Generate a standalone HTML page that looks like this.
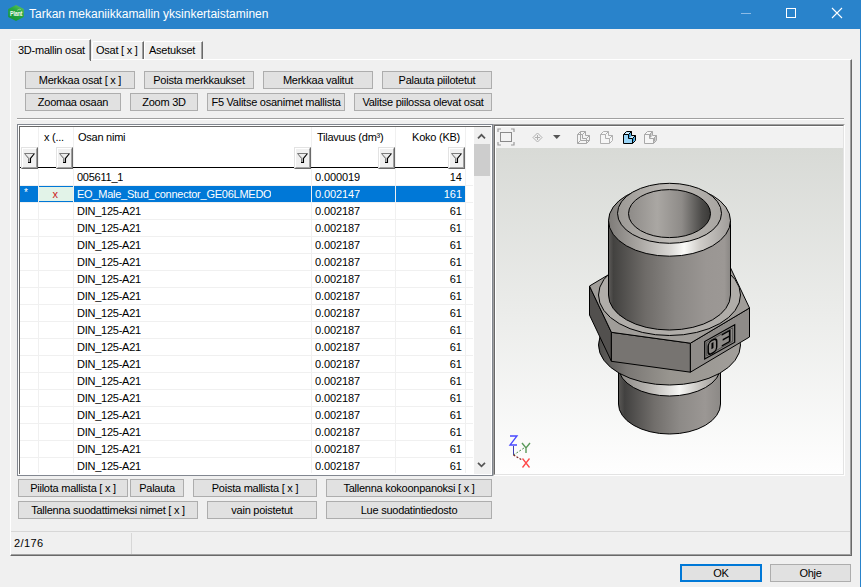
<!DOCTYPE html><html><head><meta charset="utf-8"><style>

*{box-sizing:border-box}
html,body{margin:0;padding:0}
body{width:861px;height:587px;overflow:hidden;background:#f0f0f0;position:relative;font-family:"Liberation Sans", sans-serif;font-size:11px;color:#000;letter-spacing:-0.25px}
.abs{position:absolute}
.btn{position:absolute;background:#e1e1e1;border:1px solid #adadad;height:18px;line-height:16px;text-align:center;white-space:nowrap;overflow:hidden}
.t{position:absolute;white-space:nowrap;line-height:16px}
.hl{position:absolute;height:1px}
.vl{position:absolute;width:1px}

</style></head><body>
<div class="abs" style="left:0;top:0;width:861px;height:29px;background:#2983cb"></div>
<div class="abs" style="left:860px;top:0;width:1px;height:587px;background:#2983cb"></div>
<svg class="abs" style="left:0;top:0" width="30" height="29" viewBox="0 0 30 29">
<defs><linearGradient id="ig" x1="0.2" y1="1" x2="0.8" y2="0"><stop offset="0" stop-color="#159436"/><stop offset="0.6" stop-color="#27a843"/><stop offset="1" stop-color="#62c456"/></linearGradient></defs>
<polygon points="16,5 23.8,9 23.8,17 16,21 8.2,17 8.2,9" fill="url(#ig)"/>
<text x="10" y="16.2" font-family="Liberation Sans" font-weight="bold" font-size="7.2" fill="#f2f8f2" textLength="12.2" lengthAdjust="spacingAndGlyphs">Plant</text>
<path d="M17 10.5 Q19 8.5 21 9.5" stroke="#a8dca8" stroke-width="0.6" fill="none"/>
</svg>
<div class="t" style="left:29px;top:6px;font-size:12px;color:#fff;letter-spacing:0;line-height:16px">Tarkan mekaniikkamallin yksinkertaistaminen</div>
<div class="abs" style="left:741px;top:13px;width:10px;height:1px;background:#8cbbe6"></div>
<div class="abs" style="left:786px;top:8px;width:10px;height:10px;border:1px solid #fff"></div>
<svg class="abs" style="left:831px;top:7px" width="13" height="13" viewBox="0 0 13 13"><path d="M1 1 L11 11 M11 1 L1 11" stroke="#fff" stroke-width="1.1"/></svg>
<div class="abs" style="left:10px;top:59px;width:842px;height:497px;border-left:1px solid #fff;border-top:1px solid #fff;border-right:1px solid #696969;border-bottom:1px solid #696969"></div>
<div class="abs" style="left:11px;top:60px;width:840px;height:495px;border-right:1px solid #a0a0a0;border-bottom:1px solid #a0a0a0"></div>
<div class="abs" style="left:10px;top:39px;width:81px;height:22px;background:#f0f0f0;border-left:1px solid #fff;border-top:1px solid #fff;border-right:1px solid #696969;border-top-left-radius:2px"></div>
<div class="abs" style="left:89px;top:40px;width:1px;height:20px;background:#a0a0a0"></div>
<div class="t" style="left:18px;top:42px">3D-mallin osat</div>
<div class="abs" style="left:92px;top:41px;width:52px;height:18px;border-left:1px solid #fff;border-top:1px solid #fff;border-right:1px solid #696969;border-top-left-radius:2px"></div>
<div class="abs" style="left:142px;top:42px;width:1px;height:17px;background:#a0a0a0"></div>
<div class="t" style="left:96px;top:42px">Osat [ x ]</div>
<div class="abs" style="left:144px;top:41px;width:59px;height:18px;border-left:1px solid #fff;border-top:1px solid #fff;border-right:1px solid #696969;border-top-left-radius:2px"></div>
<div class="abs" style="left:201px;top:42px;width:1px;height:17px;background:#a0a0a0"></div>
<div class="t" style="left:149px;top:42px">Asetukset</div>
<div class="btn" style="left:25px;top:71px;width:110px;height:18px;">Merkkaa osat [ x ]</div>
<div class="btn" style="left:144px;top:71px;width:110px;height:18px;">Poista merkkaukset</div>
<div class="btn" style="left:263px;top:71px;width:110px;height:18px;">Merkkaa valitut</div>
<div class="btn" style="left:382px;top:71px;width:110px;height:18px;">Palauta piilotetut</div>
<div class="btn" style="left:25px;top:93px;width:96px;height:18px;">Zoomaa osaan</div>
<div class="btn" style="left:130px;top:93px;width:68px;height:18px;">Zoom 3D</div>
<div class="btn" style="left:207px;top:93px;width:138px;height:18px;">F5 Valitse osanimet mallista</div>
<div class="btn" style="left:354px;top:93px;width:138px;height:18px;">Valitse piilossa olevat osat</div>
<div class="hl" style="left:17px;top:118px;width:827px;background:#a0a0a0"></div>
<div class="hl" style="left:17px;top:119px;width:827px;background:#fff"></div>
<div class="abs" style="left:17px;top:124px;width:476px;height:352px;border:1px solid #828790;background:#fff"></div>
<div class="abs" style="left:19px;top:126px;width:472px;height:348px;border-left:1px solid #696969;border-top:1px solid #696969"></div>
<div class="vl" style="left:38px;top:127px;height:346px;background:#f0f0f0"></div>
<div class="vl" style="left:73px;top:127px;height:346px;background:#f0f0f0"></div>
<div class="vl" style="left:311px;top:127px;height:346px;background:#f0f0f0"></div>
<div class="vl" style="left:395px;top:127px;height:346px;background:#f0f0f0"></div>
<div class="vl" style="left:465px;top:127px;height:346px;background:#f0f0f0"></div>
<div class="hl" style="left:20px;top:167px;width:445px;background:#000"></div>
<div class="abs" style="left:21px;top:147px;width:17px;height:22px;border-left:1px solid #e3e3e3;border-top:1px solid #e3e3e3;border-right:1px solid #696969;border-bottom:1px solid #696969"><div class="abs" style="left:0;top:0;width:15px;height:20px;background:#f0f0f0;border-left:1px solid #fff;border-top:1px solid #fff;border-right:1px solid #a0a0a0;border-bottom:1px solid #a0a0a0"><svg width="13" height="18" viewBox="0 0 13 18" style="position:absolute;left:0;top:0"><path d="M1.5 4.5 H11.5 L7.5 9.5 V13.5 H5.5 V9.5 Z" fill="#b8b8b8"/><path d="M2.5 5 H10.5 L6.5 9 Z" fill="#ececec"/><path d="M5.5 13.5 V9.5 L1.5 4.5 H11" fill="none" stroke="#7a7a7a" stroke-width="1"/><path d="M11.5 4.5 L7.5 9.5 V13.5 H5" fill="none" stroke="#000" stroke-width="1.1"/></svg></div></div>
<div class="abs" style="left:56px;top:147px;width:17px;height:22px;border-left:1px solid #e3e3e3;border-top:1px solid #e3e3e3;border-right:1px solid #696969;border-bottom:1px solid #696969"><div class="abs" style="left:0;top:0;width:15px;height:20px;background:#f0f0f0;border-left:1px solid #fff;border-top:1px solid #fff;border-right:1px solid #a0a0a0;border-bottom:1px solid #a0a0a0"><svg width="13" height="18" viewBox="0 0 13 18" style="position:absolute;left:0;top:0"><path d="M1.5 4.5 H11.5 L7.5 9.5 V13.5 H5.5 V9.5 Z" fill="#b8b8b8"/><path d="M2.5 5 H10.5 L6.5 9 Z" fill="#ececec"/><path d="M5.5 13.5 V9.5 L1.5 4.5 H11" fill="none" stroke="#7a7a7a" stroke-width="1"/><path d="M11.5 4.5 L7.5 9.5 V13.5 H5" fill="none" stroke="#000" stroke-width="1.1"/></svg></div></div>
<div class="abs" style="left:294px;top:147px;width:17px;height:22px;border-left:1px solid #e3e3e3;border-top:1px solid #e3e3e3;border-right:1px solid #696969;border-bottom:1px solid #696969"><div class="abs" style="left:0;top:0;width:15px;height:20px;background:#f0f0f0;border-left:1px solid #fff;border-top:1px solid #fff;border-right:1px solid #a0a0a0;border-bottom:1px solid #a0a0a0"><svg width="13" height="18" viewBox="0 0 13 18" style="position:absolute;left:0;top:0"><path d="M1.5 4.5 H11.5 L7.5 9.5 V13.5 H5.5 V9.5 Z" fill="#b8b8b8"/><path d="M2.5 5 H10.5 L6.5 9 Z" fill="#ececec"/><path d="M5.5 13.5 V9.5 L1.5 4.5 H11" fill="none" stroke="#7a7a7a" stroke-width="1"/><path d="M11.5 4.5 L7.5 9.5 V13.5 H5" fill="none" stroke="#000" stroke-width="1.1"/></svg></div></div>
<div class="abs" style="left:378px;top:147px;width:17px;height:22px;border-left:1px solid #e3e3e3;border-top:1px solid #e3e3e3;border-right:1px solid #696969;border-bottom:1px solid #696969"><div class="abs" style="left:0;top:0;width:15px;height:20px;background:#f0f0f0;border-left:1px solid #fff;border-top:1px solid #fff;border-right:1px solid #a0a0a0;border-bottom:1px solid #a0a0a0"><svg width="13" height="18" viewBox="0 0 13 18" style="position:absolute;left:0;top:0"><path d="M1.5 4.5 H11.5 L7.5 9.5 V13.5 H5.5 V9.5 Z" fill="#b8b8b8"/><path d="M2.5 5 H10.5 L6.5 9 Z" fill="#ececec"/><path d="M5.5 13.5 V9.5 L1.5 4.5 H11" fill="none" stroke="#7a7a7a" stroke-width="1"/><path d="M11.5 4.5 L7.5 9.5 V13.5 H5" fill="none" stroke="#000" stroke-width="1.1"/></svg></div></div>
<div class="abs" style="left:448px;top:147px;width:17px;height:22px;border-left:1px solid #e3e3e3;border-top:1px solid #e3e3e3;border-right:1px solid #696969;border-bottom:1px solid #696969"><div class="abs" style="left:0;top:0;width:15px;height:20px;background:#f0f0f0;border-left:1px solid #fff;border-top:1px solid #fff;border-right:1px solid #a0a0a0;border-bottom:1px solid #a0a0a0"><svg width="13" height="18" viewBox="0 0 13 18" style="position:absolute;left:0;top:0"><path d="M1.5 4.5 H11.5 L7.5 9.5 V13.5 H5.5 V9.5 Z" fill="#b8b8b8"/><path d="M2.5 5 H10.5 L6.5 9 Z" fill="#ececec"/><path d="M5.5 13.5 V9.5 L1.5 4.5 H11" fill="none" stroke="#7a7a7a" stroke-width="1"/><path d="M11.5 4.5 L7.5 9.5 V13.5 H5" fill="none" stroke="#000" stroke-width="1.1"/></svg></div></div>
<div class="t" style="left:44px;top:129px">x (...</div>
<div class="t" style="left:78px;top:129px">Osan nimi</div>
<div class="t" style="left:317px;top:129px">Tilavuus (dm³)</div>
<div class="t" style="left:396px;top:129px;width:64px;text-align:right">Koko (KB)</div>
<div class="hl" style="left:20px;top:185px;width:453px;background:#f0f0f0"></div>
<div class="t" style="left:77px;top:169px;color:#000;height:16px;overflow:hidden">005611_1</div>
<div class="t" style="left:315px;top:169px;color:#000;height:16px;overflow:hidden;letter-spacing:-0.1px">0.000019</div>
<div class="t" style="left:396px;top:169px;width:66px;text-align:right;color:#000;height:16px;overflow:hidden;letter-spacing:0">14</div>
<div class="hl" style="left:20px;top:202px;width:453px;background:#f0f0f0"></div>
<div class="abs" style="left:20px;top:186px;width:18px;height:16px;background:#0078d7"></div>
<div class="abs" style="left:39px;top:186px;width:34px;height:16px;background:#e2f3e8;border-top:1px solid #0078d7;border-bottom:1px solid #0078d7"></div>
<div class="abs" style="left:74px;top:186px;width:237px;height:16px;background:#0078d7"></div>
<div class="abs" style="left:312px;top:186px;width:83px;height:16px;background:#0078d7"></div>
<div class="abs" style="left:396px;top:186px;width:69px;height:16px;background:#0078d7"></div>
<div class="t" style="left:24px;top:185px;color:#fff;font-size:10px">*</div>
<div class="t" style="left:38px;top:186px;width:34px;text-align:center;color:#cc1a1a">x</div>
<div class="t" style="left:77px;top:186px;color:#fff;height:16px;overflow:hidden">EO_Male_Stud_connector_GE06LMEDO</div>
<div class="t" style="left:315px;top:186px;color:#fff;height:16px;overflow:hidden;letter-spacing:-0.1px">0.002147</div>
<div class="t" style="left:396px;top:186px;width:66px;text-align:right;color:#fff;height:16px;overflow:hidden;letter-spacing:0">161</div>
<div class="hl" style="left:20px;top:219px;width:453px;background:#f0f0f0"></div>
<div class="t" style="left:77px;top:203px;color:#000;height:16px;overflow:hidden">DIN_125-A21</div>
<div class="t" style="left:315px;top:203px;color:#000;height:16px;overflow:hidden;letter-spacing:-0.1px">0.002187</div>
<div class="t" style="left:396px;top:203px;width:66px;text-align:right;color:#000;height:16px;overflow:hidden;letter-spacing:0">61</div>
<div class="hl" style="left:20px;top:236px;width:453px;background:#f0f0f0"></div>
<div class="t" style="left:77px;top:220px;color:#000;height:16px;overflow:hidden">DIN_125-A21</div>
<div class="t" style="left:315px;top:220px;color:#000;height:16px;overflow:hidden;letter-spacing:-0.1px">0.002187</div>
<div class="t" style="left:396px;top:220px;width:66px;text-align:right;color:#000;height:16px;overflow:hidden;letter-spacing:0">61</div>
<div class="hl" style="left:20px;top:253px;width:453px;background:#f0f0f0"></div>
<div class="t" style="left:77px;top:237px;color:#000;height:16px;overflow:hidden">DIN_125-A21</div>
<div class="t" style="left:315px;top:237px;color:#000;height:16px;overflow:hidden;letter-spacing:-0.1px">0.002187</div>
<div class="t" style="left:396px;top:237px;width:66px;text-align:right;color:#000;height:16px;overflow:hidden;letter-spacing:0">61</div>
<div class="hl" style="left:20px;top:270px;width:453px;background:#f0f0f0"></div>
<div class="t" style="left:77px;top:254px;color:#000;height:16px;overflow:hidden">DIN_125-A21</div>
<div class="t" style="left:315px;top:254px;color:#000;height:16px;overflow:hidden;letter-spacing:-0.1px">0.002187</div>
<div class="t" style="left:396px;top:254px;width:66px;text-align:right;color:#000;height:16px;overflow:hidden;letter-spacing:0">61</div>
<div class="hl" style="left:20px;top:287px;width:453px;background:#f0f0f0"></div>
<div class="t" style="left:77px;top:271px;color:#000;height:16px;overflow:hidden">DIN_125-A21</div>
<div class="t" style="left:315px;top:271px;color:#000;height:16px;overflow:hidden;letter-spacing:-0.1px">0.002187</div>
<div class="t" style="left:396px;top:271px;width:66px;text-align:right;color:#000;height:16px;overflow:hidden;letter-spacing:0">61</div>
<div class="hl" style="left:20px;top:304px;width:453px;background:#f0f0f0"></div>
<div class="t" style="left:77px;top:288px;color:#000;height:16px;overflow:hidden">DIN_125-A21</div>
<div class="t" style="left:315px;top:288px;color:#000;height:16px;overflow:hidden;letter-spacing:-0.1px">0.002187</div>
<div class="t" style="left:396px;top:288px;width:66px;text-align:right;color:#000;height:16px;overflow:hidden;letter-spacing:0">61</div>
<div class="hl" style="left:20px;top:321px;width:453px;background:#f0f0f0"></div>
<div class="t" style="left:77px;top:305px;color:#000;height:16px;overflow:hidden">DIN_125-A21</div>
<div class="t" style="left:315px;top:305px;color:#000;height:16px;overflow:hidden;letter-spacing:-0.1px">0.002187</div>
<div class="t" style="left:396px;top:305px;width:66px;text-align:right;color:#000;height:16px;overflow:hidden;letter-spacing:0">61</div>
<div class="hl" style="left:20px;top:338px;width:453px;background:#f0f0f0"></div>
<div class="t" style="left:77px;top:322px;color:#000;height:16px;overflow:hidden">DIN_125-A21</div>
<div class="t" style="left:315px;top:322px;color:#000;height:16px;overflow:hidden;letter-spacing:-0.1px">0.002187</div>
<div class="t" style="left:396px;top:322px;width:66px;text-align:right;color:#000;height:16px;overflow:hidden;letter-spacing:0">61</div>
<div class="hl" style="left:20px;top:355px;width:453px;background:#f0f0f0"></div>
<div class="t" style="left:77px;top:339px;color:#000;height:16px;overflow:hidden">DIN_125-A21</div>
<div class="t" style="left:315px;top:339px;color:#000;height:16px;overflow:hidden;letter-spacing:-0.1px">0.002187</div>
<div class="t" style="left:396px;top:339px;width:66px;text-align:right;color:#000;height:16px;overflow:hidden;letter-spacing:0">61</div>
<div class="hl" style="left:20px;top:372px;width:453px;background:#f0f0f0"></div>
<div class="t" style="left:77px;top:356px;color:#000;height:16px;overflow:hidden">DIN_125-A21</div>
<div class="t" style="left:315px;top:356px;color:#000;height:16px;overflow:hidden;letter-spacing:-0.1px">0.002187</div>
<div class="t" style="left:396px;top:356px;width:66px;text-align:right;color:#000;height:16px;overflow:hidden;letter-spacing:0">61</div>
<div class="hl" style="left:20px;top:389px;width:453px;background:#f0f0f0"></div>
<div class="t" style="left:77px;top:373px;color:#000;height:16px;overflow:hidden">DIN_125-A21</div>
<div class="t" style="left:315px;top:373px;color:#000;height:16px;overflow:hidden;letter-spacing:-0.1px">0.002187</div>
<div class="t" style="left:396px;top:373px;width:66px;text-align:right;color:#000;height:16px;overflow:hidden;letter-spacing:0">61</div>
<div class="hl" style="left:20px;top:406px;width:453px;background:#f0f0f0"></div>
<div class="t" style="left:77px;top:390px;color:#000;height:16px;overflow:hidden">DIN_125-A21</div>
<div class="t" style="left:315px;top:390px;color:#000;height:16px;overflow:hidden;letter-spacing:-0.1px">0.002187</div>
<div class="t" style="left:396px;top:390px;width:66px;text-align:right;color:#000;height:16px;overflow:hidden;letter-spacing:0">61</div>
<div class="hl" style="left:20px;top:423px;width:453px;background:#f0f0f0"></div>
<div class="t" style="left:77px;top:407px;color:#000;height:16px;overflow:hidden">DIN_125-A21</div>
<div class="t" style="left:315px;top:407px;color:#000;height:16px;overflow:hidden;letter-spacing:-0.1px">0.002187</div>
<div class="t" style="left:396px;top:407px;width:66px;text-align:right;color:#000;height:16px;overflow:hidden;letter-spacing:0">61</div>
<div class="hl" style="left:20px;top:440px;width:453px;background:#f0f0f0"></div>
<div class="t" style="left:77px;top:424px;color:#000;height:16px;overflow:hidden">DIN_125-A21</div>
<div class="t" style="left:315px;top:424px;color:#000;height:16px;overflow:hidden;letter-spacing:-0.1px">0.002187</div>
<div class="t" style="left:396px;top:424px;width:66px;text-align:right;color:#000;height:16px;overflow:hidden;letter-spacing:0">61</div>
<div class="hl" style="left:20px;top:457px;width:453px;background:#f0f0f0"></div>
<div class="t" style="left:77px;top:441px;color:#000;height:16px;overflow:hidden">DIN_125-A21</div>
<div class="t" style="left:315px;top:441px;color:#000;height:16px;overflow:hidden;letter-spacing:-0.1px">0.002187</div>
<div class="t" style="left:396px;top:441px;width:66px;text-align:right;color:#000;height:16px;overflow:hidden;letter-spacing:0">61</div>
<div class="t" style="left:77px;top:458px;color:#000;height:15px;overflow:hidden">DIN_125-A21</div>
<div class="t" style="left:315px;top:458px;color:#000;height:15px;overflow:hidden;letter-spacing:-0.1px">0.002187</div>
<div class="t" style="left:396px;top:458px;width:66px;text-align:right;color:#000;height:15px;overflow:hidden;letter-spacing:0">61</div>
<div class="abs" style="left:474px;top:127px;width:17px;height:347px;background:#f0f0f0"></div>
<div class="abs" style="left:474px;top:144px;width:16px;height:32px;background:#cdcdcd"></div>
<svg class="abs" style="left:474px;top:130px" width="17" height="12" viewBox="0 0 17 12"><path d="M4 8.3 L7.5 4.8 L11 8.3" stroke="#555" stroke-width="1.7" fill="none"/></svg>
<svg class="abs" style="left:474px;top:458px" width="17" height="12" viewBox="0 0 17 12"><path d="M4 4.8 L7.5 8.3 L11 4.8" stroke="#555" stroke-width="1.7" fill="none"/></svg>
<div class="abs" style="left:493px;top:124px;width:352px;height:352px;border-left:1px solid #a0a0a0;border-top:1px solid #a0a0a0;border-right:1px solid #fff;border-bottom:1px solid #fff"></div>
<div class="abs" style="left:494px;top:125px;width:350px;height:350px;border-left:1px solid #696969;border-top:1px solid #696969;border-right:1px solid #e3e3e3;border-bottom:1px solid #e3e3e3;background:#fff"></div>
<div class="abs" style="left:495px;top:126px;width:348px;height:348px;background:#f2f2f2;border-left:1px solid #fff;border-top:1px solid #fff"></div>
<svg class="abs" style="left:496px;top:148px" width="347" height="326" viewBox="496 148 347 326">
<defs>
<linearGradient id="bg3" x1="0" y1="0" x2="0" y2="1"><stop offset="0" stop-color="#d8dad6"/><stop offset="1" stop-color="#fefefe"/></linearGradient>
<linearGradient id="cyl" x1="0" y1="0" x2="1" y2="0">
 <stop offset="0" stop-color="#5e5c5a"/><stop offset="0.04" stop-color="#434240"/><stop offset="0.3" stop-color="#6e6b68"/>
 <stop offset="0.55" stop-color="#8a8784"/><stop offset="0.8" stop-color="#9a9693"/><stop offset="0.95" stop-color="#9c9895"/><stop offset="1" stop-color="#8a8784"/></linearGradient>
<linearGradient id="cham" x1="0" y1="0" x2="1" y2="0">
 <stop offset="0" stop-color="#7e7b78"/><stop offset="0.25" stop-color="#a9a6a2"/><stop offset="0.5" stop-color="#d8d6d3"/><stop offset="0.62" stop-color="#fafaf8"/>
 <stop offset="0.75" stop-color="#cfccc8"/><stop offset="1" stop-color="#9f9c99"/></linearGradient>
<linearGradient id="face" x1="0" y1="0" x2="1" y2="0">
 <stop offset="0" stop-color="#9c9995"/><stop offset="0.5" stop-color="#bdbab6"/><stop offset="1" stop-color="#a8a5a1"/></linearGradient>
<linearGradient id="bore" x1="0" y1="0" x2="1" y2="0">
 <stop offset="0" stop-color="#8e8b88"/><stop offset="0.35" stop-color="#aaa7a3"/><stop offset="0.65" stop-color="#8e8b88"/><stop offset="0.9" stop-color="#4a4947"/><stop offset="1" stop-color="#3a3937"/></linearGradient>
<linearGradient id="band" x1="0" y1="0" x2="1" y2="0">
 <stop offset="0" stop-color="#8a8784"/><stop offset="0.3" stop-color="#b8b5b1"/><stop offset="0.6" stop-color="#f6f6f4"/><stop offset="0.8" stop-color="#c5c2be"/><stop offset="1" stop-color="#9a9794"/></linearGradient>
<linearGradient id="lcyl" x1="0" y1="0" x2="1" y2="0">
 <stop offset="0" stop-color="#5a5856"/><stop offset="0.06" stop-color="#424140"/><stop offset="0.35" stop-color="#716e6b"/>
 <stop offset="0.6" stop-color="#8d8a87"/><stop offset="0.85" stop-color="#9b9794"/><stop offset="1" stop-color="#8c8986"/></linearGradient>
<linearGradient id="rim" x1="0" y1="0" x2="1" y2="0">
 <stop offset="0" stop-color="#4e4d4b"/><stop offset="0.2" stop-color="#7a7774"/><stop offset="0.5" stop-color="#98958f"/><stop offset="1" stop-color="#a19e9a"/></linearGradient>
</defs>
<rect x="496" y="148" width="347" height="326" fill="url(#bg3)"/>
<path d="M618.5 367 L618.5 404 A51 30 0 0 0 720.5 404 L720.5 367 Z" fill="url(#lcyl)" stroke="#000" stroke-width="1"/>
<ellipse cx="669.5" cy="367" rx="51" ry="29" fill="url(#band)" stroke="#000" stroke-width="1"/>
<ellipse cx="669.5" cy="345" rx="71" ry="40" fill="url(#rim)" stroke="#000" stroke-width="1"/>
<polygon points="589.5,286 611.4,332.3 611.4,361.3 589.5,315" fill="#52504e" stroke="#000" stroke-width="1" stroke-linejoin="round"/>
<polygon points="611.4,332.3 690.4,343.2 690.4,372.2 611.4,361.3" fill="#777471" stroke="#000" stroke-width="1" stroke-linejoin="round"/>
<polygon points="690.4,343.2 749.5,308 749.5,337 690.4,372.2" fill="#8e8b88" stroke="#000" stroke-width="1" stroke-linejoin="round"/>
<polygon points="589.5,286 611.4,332.3 690.4,343.2 749.5,308 727.6,261.7 648.6,250.8" fill="#a09d99" stroke="#000" stroke-width="1" stroke-linejoin="round"/>
<ellipse cx="669.5" cy="295" rx="71" ry="40.5" fill="#b0ada9" stroke="#000" stroke-width="1"/>
<path d="M608.5 220.7 L608.5 295 A61 35 0 0 0 730.5 295 L730.5 220.7 Z" fill="url(#cyl)" stroke="#000" stroke-width="1"/>
<ellipse cx="669.5" cy="220.7" rx="61" ry="35.5" fill="url(#cham)" stroke="#000" stroke-width="1"/>
<ellipse cx="669.5" cy="213.3" rx="52" ry="30" fill="url(#face)" stroke="#000" stroke-width="1"/>
<ellipse cx="669.5" cy="213.6" rx="41" ry="24" fill="url(#bore)" stroke="#000" stroke-width="1"/>
<g transform="matrix(1,-0.56,0,1,704.7,341.5)" fill="none" stroke="#000"><rect x="0" y="0" width="30" height="17.5" stroke-width="1.2"/><rect x="2" y="2" width="26" height="13.5" stroke-width="0.6" stroke="#333"/><rect x="3.5" y="3" width="8.5" height="13" rx="3.5" stroke-width="1.5"/><path d="M7.75 5.5 L7.75 11.5" stroke-width="2"/><path d="M25 2.5 L25 14.5 M17 3 L25 3 M18 8.5 L25 8.5 M17 14 L25 14" stroke-width="1.7"/></g>
<path d="M513.5 446 L513.5 455" stroke="#4040b0" stroke-width="1"/>
<path d="M513.5 455 L524 448" stroke="#4a8a4a" stroke-width="1" stroke-dasharray="2,1.5"/>
<path d="M513.5 455 L522 460" stroke="#802020" stroke-width="1.3" stroke-dasharray="2,1.5"/>
<path d="M510 436 L517 436 L510 445 L517 445" fill="none" stroke="#4848ff" stroke-width="1.3"/>
<path d="M522 443 L526 448 L530 443 M526 448 L526 453" fill="none" stroke="#5a9a5a" stroke-width="1.4"/>
<path d="M522.5 458.5 L529.5 467.5 M529.5 458.5 L522.5 467.5" fill="none" stroke="#ff4848" stroke-width="1.3"/>
</svg>
<svg class="abs" style="left:496px;top:127px" width="347" height="20" viewBox="496 127 347 20">
<rect x="500.5" y="132.5" width="11" height="9" fill="none" stroke="#8a8a8a" stroke-width="1"/>
<path d="M498 132 L498 129 L501 129 M511 129 L514 129 L514 132 M514 142 L514 145 L511 145 M501 145 L498 145 L498 142" fill="none" stroke="#9a9a9a" stroke-width="1.2"/>
<path d="M537.5 133 L542 137.5 L537.5 142 L533 137.5 Z" fill="none" stroke="#b0b0b0" stroke-width="1"/>
<path d="M537.5 135 L537.5 140 M535 137.5 L540 137.5" stroke="#b0b0b0" stroke-width="1"/>
<path d="M553 135 L560.5 135 L556.75 139 Z" fill="#555"/>
<g transform="translate(577,131)"><polygon points="0.5,3.5 3.5,0.5 8.5,0.5 8.5,4.5 12.5,4.5 12.5,9.5 9.5,12.5 0.5,12.5" fill="#f4f4f4" stroke="#a8a8a8" stroke-width="1" stroke-linejoin="miter"/><polygon points="1.5,3.5 3.5,1.5 7.5,1.5 5.5,3.5" fill="#f4f4f4"/><polygon points="6.5,7.5 8.5,5.5 11.5,5.5 9.5,7.5" fill="#f4f4f4"/><polygon points="5.5,3.5 7.5,1.5 7.5,5.5 5.5,7.5" fill="#f4f4f4"/><polygon points="9.5,7.5 11.5,5.5 11.5,9.5 9.5,11.5" fill="#f4f4f4"/><path d="M0.5 3.5 L5.5 3.5 L5.5 7.5 L9.5 7.5 L9.5 12.5 M5.5 3.5 L8.5 0.5 M9.5 7.5 L12.5 4.5" fill="none" stroke="#a8a8a8" stroke-width="1" stroke-linejoin="miter"/><path d="M3.5 0.5 L3.5 9.5 L0.5 12.5 M3.5 9.5 L12.5 9.5" fill="none" stroke="#a8a8a8" stroke-width="1" stroke-linejoin="miter"/></g>
<g transform="translate(600,131)"><polygon points="0.5,3.5 3.5,0.5 8.5,0.5 8.5,4.5 12.5,4.5 12.5,9.5 9.5,12.5 0.5,12.5" fill="#f6f6f6" stroke="#b0b0b0" stroke-width="1" stroke-linejoin="miter"/><polygon points="1.5,3.5 3.5,1.5 7.5,1.5 5.5,3.5" fill="#f6f6f6"/><polygon points="6.5,7.5 8.5,5.5 11.5,5.5 9.5,7.5" fill="#f6f6f6"/><polygon points="5.5,3.5 7.5,1.5 7.5,5.5 5.5,7.5" fill="#f6f6f6"/><polygon points="9.5,7.5 11.5,5.5 11.5,9.5 9.5,11.5" fill="#f6f6f6"/><path d="M0.5 3.5 L5.5 3.5 L5.5 7.5 L9.5 7.5 L9.5 12.5 M5.5 3.5 L8.5 0.5 M9.5 7.5 L12.5 4.5" fill="none" stroke="#b0b0b0" stroke-width="1" stroke-linejoin="miter"/></g>
<g transform="translate(623,131)"><polygon points="0.5,3.5 3.5,0.5 8.5,0.5 8.5,4.5 12.5,4.5 12.5,9.5 9.5,12.5 0.5,12.5" fill="#99d4f6" stroke="#000" stroke-width="1" stroke-linejoin="miter"/><polygon points="1.5,3.5 3.5,1.5 7.5,1.5 5.5,3.5" fill="#d8f0fc"/><polygon points="6.5,7.5 8.5,5.5 11.5,5.5 9.5,7.5" fill="#d8f0fc"/><polygon points="5.5,3.5 7.5,1.5 7.5,5.5 5.5,7.5" fill="#2f95cf"/><polygon points="9.5,7.5 11.5,5.5 11.5,9.5 9.5,11.5" fill="#2f95cf"/><path d="M0.5 3.5 L5.5 3.5 L5.5 7.5 L9.5 7.5 L9.5 12.5 M5.5 3.5 L8.5 0.5 M9.5 7.5 L12.5 4.5" fill="none" stroke="#000" stroke-width="1" stroke-linejoin="miter"/></g>
<g transform="translate(644,131)"><polygon points="0.5,3.5 3.5,0.5 8.5,0.5 8.5,4.5 12.5,4.5 12.5,9.5 9.5,12.5 0.5,12.5" fill="#f6f6f6" stroke="#a8a8a8" stroke-width="1" stroke-linejoin="miter"/><polygon points="1.5,3.5 3.5,1.5 7.5,1.5 5.5,3.5" fill="#f6f6f6"/><polygon points="6.5,7.5 8.5,5.5 11.5,5.5 9.5,7.5" fill="#f6f6f6"/><polygon points="5.5,3.5 7.5,1.5 7.5,5.5 5.5,7.5" fill="#a8a8a8"/><polygon points="9.5,7.5 11.5,5.5 11.5,9.5 9.5,11.5" fill="#a8a8a8"/><path d="M0.5 3.5 L5.5 3.5 L5.5 7.5 L9.5 7.5 L9.5 12.5 M5.5 3.5 L8.5 0.5 M9.5 7.5 L12.5 4.5" fill="none" stroke="#a8a8a8" stroke-width="1" stroke-linejoin="miter"/></g>
</svg>
<div class="btn" style="left:18px;top:479px;width:110px;height:18px;">Piilota mallista [ x ]</div>
<div class="btn" style="left:130px;top:479px;width:54px;height:18px;">Palauta</div>
<div class="btn" style="left:193px;top:479px;width:124px;height:18px;">Poista mallista [ x ]</div>
<div class="btn" style="left:326px;top:479px;width:166px;height:18px;">Tallenna kokoonpanoksi [ x ]</div>
<div class="btn" style="left:18px;top:501px;width:180px;height:18px;">Tallenna suodattimeksi nimet [ x ]</div>
<div class="btn" style="left:207px;top:501px;width:110px;height:18px;">vain poistetut</div>
<div class="btn" style="left:326px;top:501px;width:166px;height:18px;">Lue suodatintiedosto</div>
<div class="hl" style="left:11px;top:531px;width:839px;background:#d7d7d7"></div>
<div class="vl" style="left:131px;top:533px;height:21px;background:#d7d7d7"></div>
<div class="t" style="left:14px;top:535px;letter-spacing:0.4px">2/176</div>
<div class="btn" style="left:680px;top:564px;width:82px;height:18px;border:2px solid #0078d7;line-height:14px">OK</div>
<div class="btn" style="left:770px;top:564px;width:81px;height:18px;">Ohje</div>
</body></html>
